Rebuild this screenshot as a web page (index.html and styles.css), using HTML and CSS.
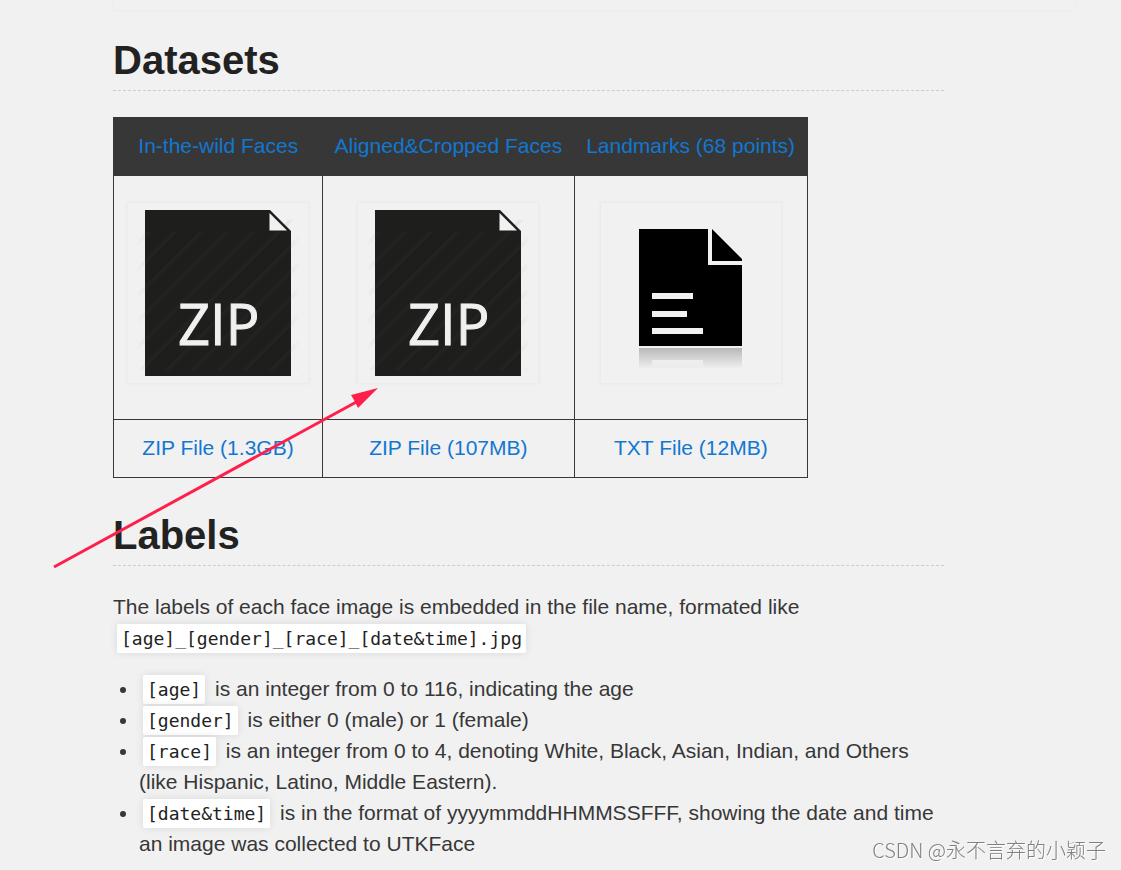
FILE: index.html
```html
<!DOCTYPE html>
<html lang="en">
<head>
<meta charset="utf-8">
<title>UTKFace Datasets</title>
<link rel="stylesheet" href="styles.css">
</head>
<body>
<svg class="defs" width="0" height="0" aria-hidden="true">
  <defs>
    <pattern id="stripes" width="26" height="26" patternUnits="userSpaceOnUse">
      <path d="M-4 30L30 -4M-17 17L17 -17M9 43L43 9" stroke="#999" stroke-width="4" opacity=".16"/>
    </pattern>
    <linearGradient id="edge">
      <stop offset="0" stop-color="#fff" stop-opacity="0"/>
      <stop offset=".1" stop-color="#fff"/>
      <stop offset=".9" stop-color="#fff"/>
      <stop offset="1" stop-color="#fff" stop-opacity="0"/>
    </linearGradient>
    <mask id="edge-mask"><rect x="9" y="8" width="164" height="166" fill="url(#edge)"/></mask>
    <linearGradient id="reflection" x1="0" y1="0" x2="0" y2="1">
      <stop offset="0" stop-color="#b8b8b8"/>
      <stop offset="1" stop-color="#f1f1f1"/>
    </linearGradient>
    <symbol id="zip-file" viewBox="0 0 182 182">
      <g mask="url(#edge-mask)">
        <rect x="9" y="18" width="164" height="150" fill="url(#stripes)"/>
      </g>
      <path d="M18 8H143L164 29V174H18Z" fill="#1e1e1c"/>
      <rect x="18" y="30" width="146" height="138" fill="url(#stripes)" opacity=".2"/>
      <path d="M142.500 11V28.500H160Z" fill="#f1f1f1"/>
      <text class="zip-text" x="51" y="143">ZIP</text>
    </symbol>
    <symbol id="text-file" viewBox="0 0 182 182">
      <path d="M39 27H108V61H142V144H39Z"/>
      <path d="M112 27L142 57V59H112Z"/>
      <path d="M52 91h41v6h-41zM52 109h35v6h-35zM52 126h51v6h-51z" fill="#f1f1f1"/>
      <path d="M108 27h4v32h30v4h-34z" fill="#f1f1f1"/>
      <rect x="39" y="146" width="103" height="21" fill="url(#reflection)"/>
      <rect x="52" y="158" width="51" height="6" fill="#ededed"/>
    </symbol>
  </defs>
</svg>
<div class="panel"></div>
<main class="content">
  <h2>Datasets</h2>
  <table>
    <thead>
      <tr>
        <th><a href="#wild">In-the-wild Faces</a></th>
        <th><a href="#aligned">Aligned&amp;Cropped Faces</a></th>
        <th><a href="#landmarks">Landmarks (68 points)</a></th>
      </tr>
    </thead>
    <tbody>
      <tr>
        <td><svg class="thumb" role="img" aria-label="Zip file"><use href="#zip-file"/></svg></td>
        <td><svg class="thumb" role="img" aria-label="Zip file"><use href="#zip-file"/></svg></td>
        <td><svg class="thumb" role="img" aria-label="Text file"><use href="#text-file"/></svg></td>
      </tr>
      <tr>
        <td><a href="#wild">ZIP File (1.3GB)</a></td>
        <td><a href="#aligned">ZIP File (107MB)</a></td>
        <td><a href="#landmarks">TXT File (12MB)</a></td>
      </tr>
    </tbody>
  </table>
  <h2>Labels</h2>
  <p>The labels of each face image is embedded in the file name, formated like <code>[age]_[gender]_[race]_[date&amp;time].jpg</code></p>
  <ul>
    <li><code>[age]</code> is an integer from 0 to 116, indicating the age</li>
    <li><code>[gender]</code> is either 0 (male) or 1 (female)</li>
    <li><code>[race]</code> is an integer from 0 to 4, denoting White, Black, Asian, Indian, and Others (like Hispanic, Latino, Middle Eastern).</li>
    <li><code>[date&amp;time]</code> is in the format of yyyymmddHHMMSSFFF, showing the date and time an image was collected to UTKFace</li>
  </ul>
</main>
<svg class="arrow" viewBox="0 0 330 186" aria-hidden="true">
  <path d="M4 182L310 15" stroke="#ff1f4b" stroke-width="3"/>
  <path d="M328 3L301 10L304 15L308 23Z" fill="#ff1f4b"/>
</svg>
<div class="watermark">CSDN @永不言弃的小颖子</div>
</body>
</html>
```
FILE: styles.css
```css
* {
  box-sizing: border-box;
}

body {
  position: relative;
  margin: 0;
  padding: 0 45px 0 113px;
  background: #f1f1f1;
  color: #373737;
  font: 21px/31px "Liberation Sans", Arial, sans-serif;
}

.defs {
  position: absolute;
}

.panel {
  height: 11px;
  border: 1px solid #eeeeee;
  border-top: 0;
  box-shadow: 0 0 5px rgba(0, 0, 0, 0.02);
}

.content {
  max-width: 831px;
  padding-top: 24px;
}

h2 {
  margin: 0 0 25px;
  padding-bottom: 5px;
  border-bottom: 1px dashed #cccccc;
  color: #222222;
  font-size: 40px;
  line-height: 50px;
}

table {
  margin: 26px 0 32px;
  border-collapse: collapse;
  border: 1px solid #373737;
}

th {
  padding: 12px 12px 14px;
  background: #373737;
  font-weight: normal;
}

td {
  padding: 12px 13px 14px;
  border: 1px solid #373737;
  text-align: center;
}

a {
  color: #1177d1;
  text-decoration: none;
}

.thumb {
  display: block;
  width: 182px;
  height: 182px;
  margin: 14px auto 21px;
  box-shadow: inset 0 0 0 1px #ebebeb, 0 0 5px rgba(0, 0, 0, 0.03);
}

.zip-text {
  fill: #f0f0f0;
  stroke: #f0f0f0;
  stroke-width: 1px;
  font: 56px "Open Sans", sans-serif;
}

p {
  margin: 0 0 20px;
}

ul {
  margin: 0;
  padding-left: 26px;
}

code {
  margin: 0 4px;
  padding: 4px;
  border-radius: 2px;
  background: #ffffff;
  box-shadow: 0 0 8px rgba(0, 0, 0, 0.1);
  color: #222222;
  font: 18px "DejaVu Sans Mono", monospace;
  white-space: nowrap;
}

.arrow {
  position: absolute;
  top: 385px;
  left: 50px;
  width: 330px;
  height: 186px;
  pointer-events: none;
}

.watermark {
  position: fixed;
  right: 15px;
  bottom: 5px;
  color: #808080;
  font: 300 20px/30px "Noto Sans CJK SC", sans-serif;
  text-shadow: 1px 1px #ffffff;
}
```
